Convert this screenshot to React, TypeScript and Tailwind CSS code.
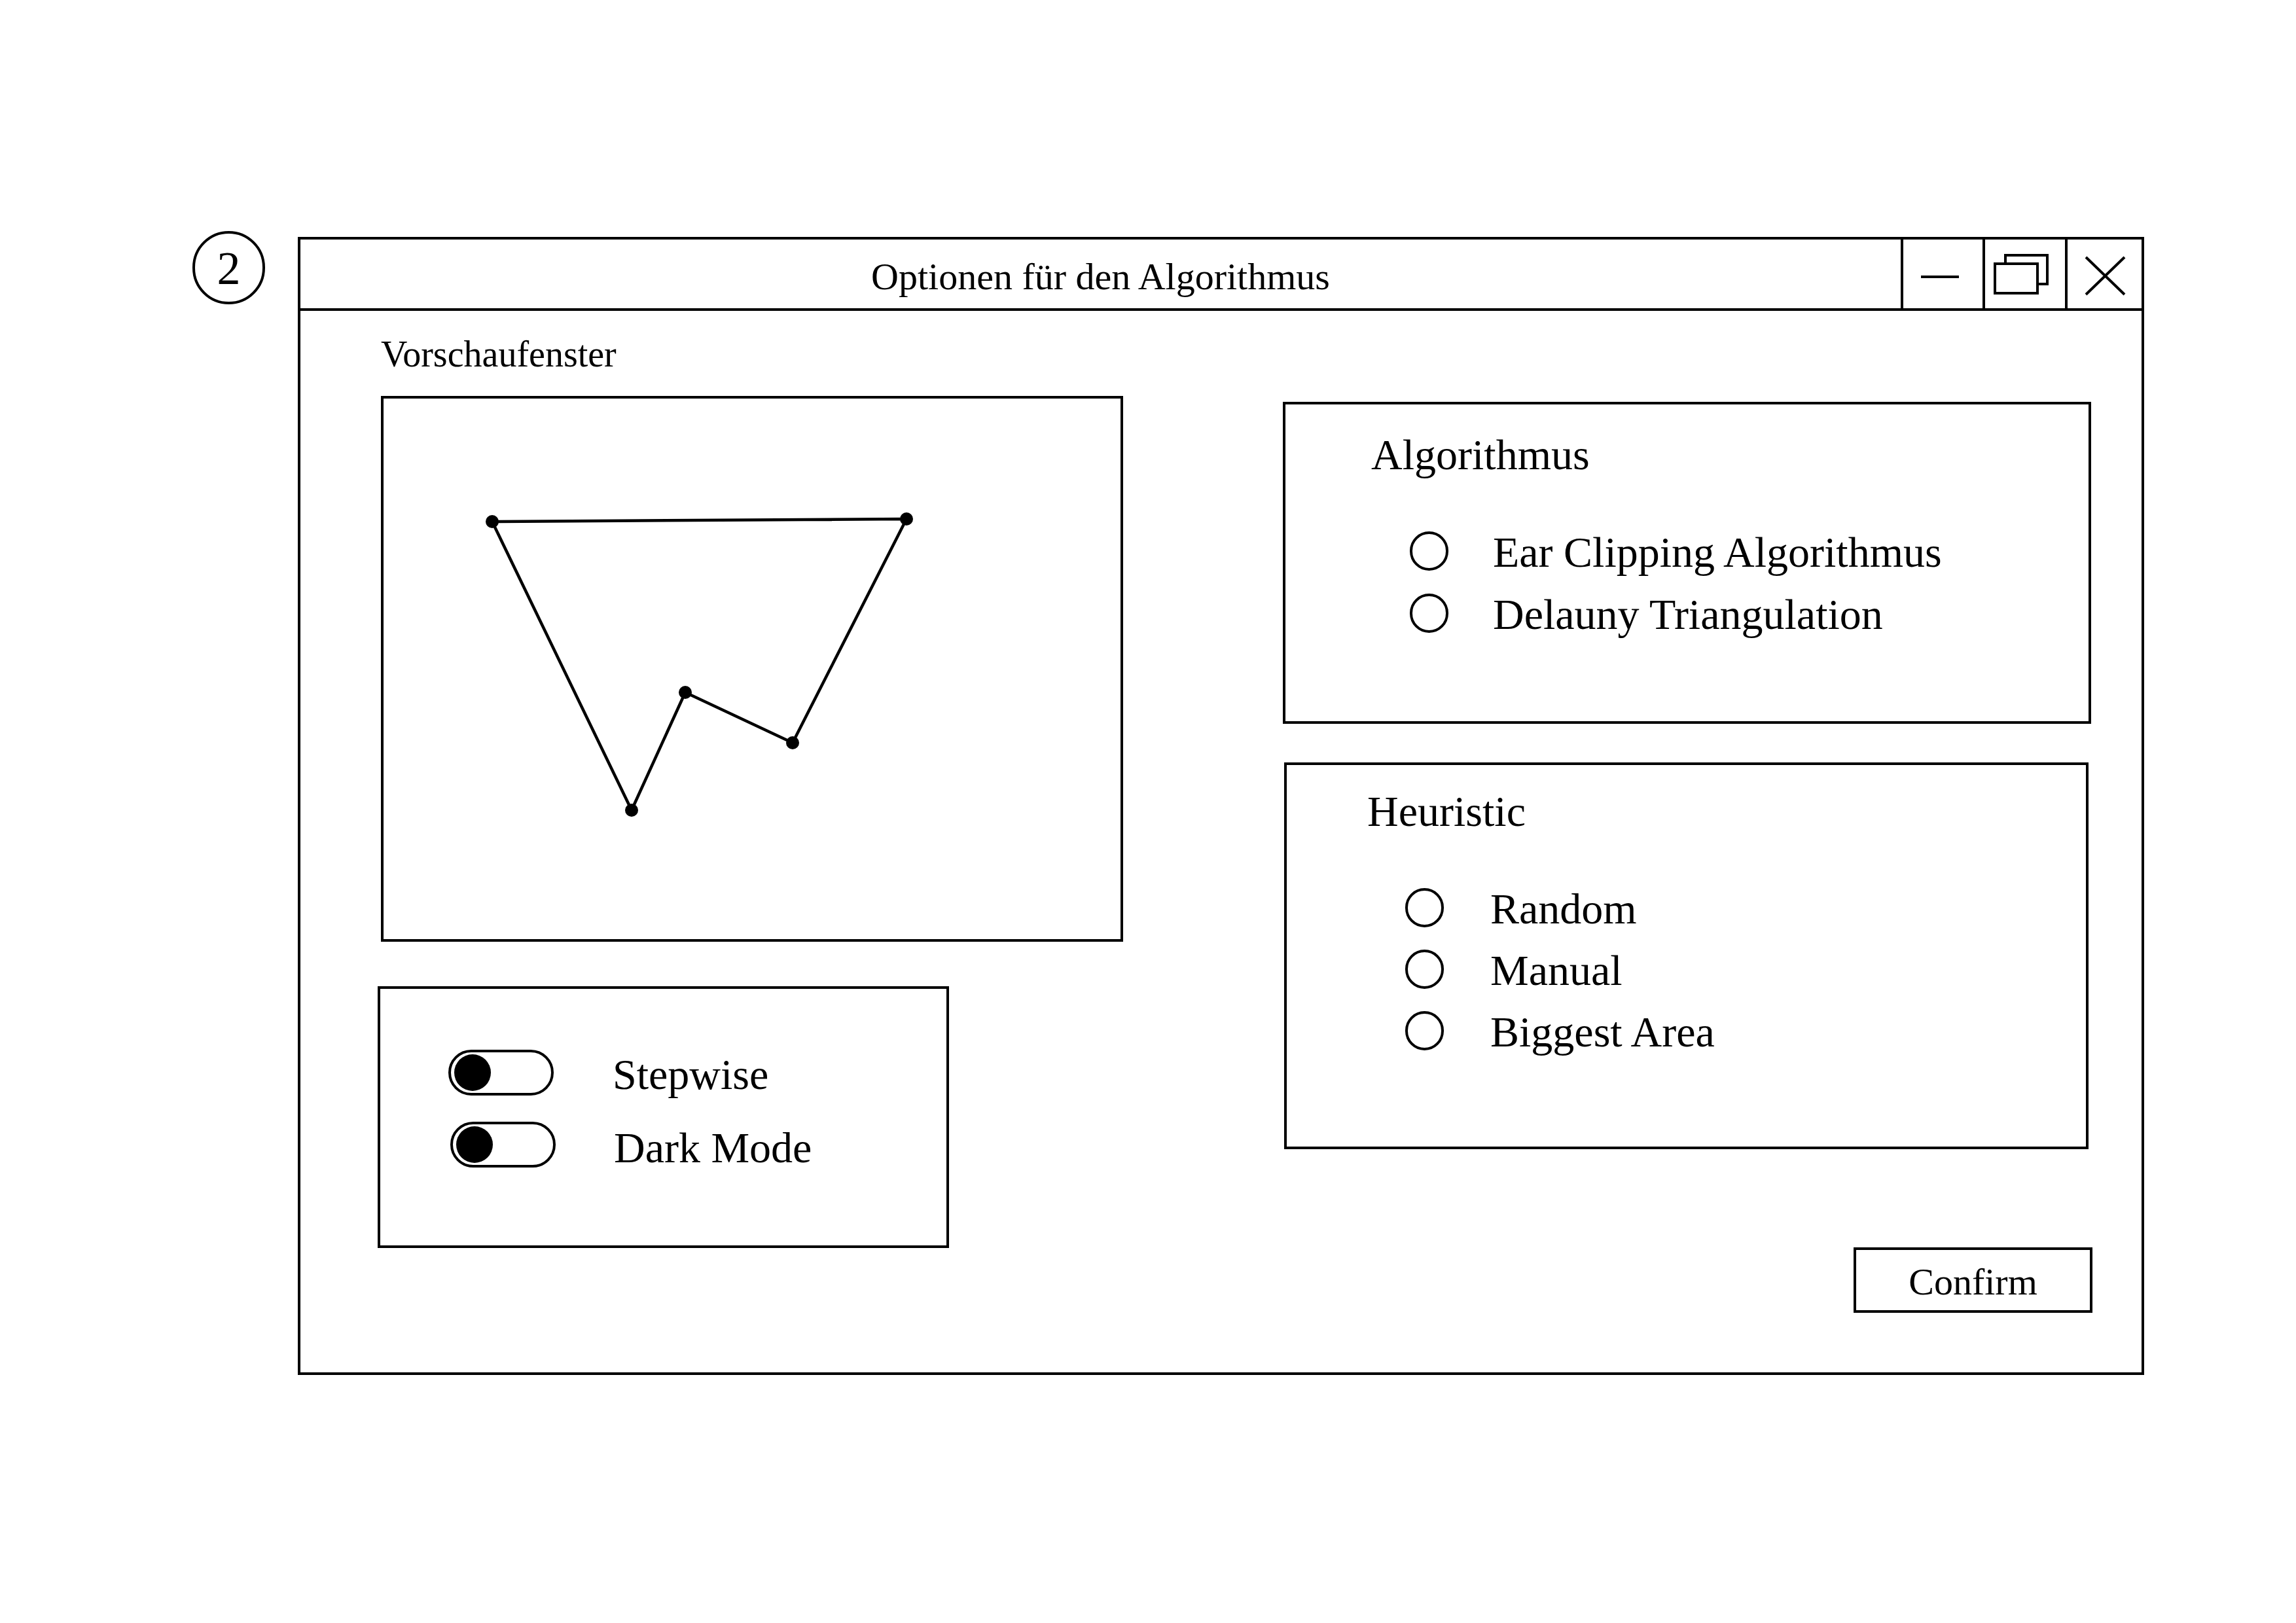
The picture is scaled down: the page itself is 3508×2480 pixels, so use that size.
import * as React from "react"

type Point = [number, number]

// polygon corners in the preview box (inner coords)
const polygon: Point[] = [
  [166, 188],
  [799, 184],
  [625, 526],
  [461, 449],
  [379, 629],
]

function Radio(props: { label: string; gap: number }) {
  return (
    <div className="flex flex-row items-center h-[60px]">
      <div className="w-[59px] h-[60px] rounded-full border-[4px] border-black shrink-0" />
      <span className="text-[66px] leading-none whitespace-nowrap pt-[4px]" style={{ marginLeft: props.gap }}>
        {props.label}
      </span>
    </div>
  )
}

function Toggle() {
  return (
    <div className="w-[161px] h-[70px] rounded-full border-[4px] border-black flex items-center pl-[5px] shrink-0">
      <div className="w-[56px] h-[56px] rounded-full bg-black" />
    </div>
  )
}

export default function App(): React.JSX.Element {
  return (
    <div className="w-[3508px] h-[2480px] bg-white text-black font-['Liberation_Serif','Times_New_Roman',serif]">
      <div className="flex flex-row items-start pl-[294px] pt-[353px]">
        <div className="w-[111px] h-[112px] rounded-full border-[4px] border-black flex items-center justify-center text-[72px] leading-none shrink-0 pt-[2px]">
          2
        </div>

        <div className="ml-[50px] mt-[9px] w-[2821px] h-[1739px] border-[4px] border-black flex flex-col">
          {/* title bar */}
          <div className="h-[109px] border-b-[4px] border-black flex flex-row">
            <div className="flex-1 flex items-center justify-center text-[58px] leading-none pt-[8px]">
              Optionen für den Algorithmus
            </div>
            <div className="w-[125px] border-l-[4px] border-black">
              <svg width="121" height="105" viewBox="0 0 121 105">
                <line x1="27" y1="57" x2="85" y2="57" stroke="black" strokeWidth="4" />
              </svg>
            </div>
            <div className="w-[126px] border-l-[4px] border-black">
              <svg width="122" height="105" viewBox="0 0 122 105">
                <rect x="31" y="24" width="64" height="44" fill="white" stroke="black" strokeWidth="4" />
                <rect x="15" y="37" width="65" height="45" fill="white" stroke="black" strokeWidth="4" />
              </svg>
            </div>
            <div className="w-[117px] border-l-[4px] border-black">
              <svg width="113" height="105" viewBox="0 0 113 105">
                <line x1="28" y1="27" x2="87" y2="84" stroke="black" strokeWidth="4" />
                <line x1="87" y1="27" x2="28" y2="84" stroke="black" strokeWidth="4" />
              </svg>
            </div>
          </div>

          {/* body */}
          <div className="flex-1 flex flex-row pl-[123px]">
            <div className="w-[1134px] flex flex-col">
              <div className="mt-[34px] h-[64px] text-[56px] leading-[64px] whitespace-nowrap">Vorschaufenster</div>

              <div className="mt-[32px] w-[1134px] h-[834px] border-[4px] border-black">
                <svg width="1126" height="826" viewBox="0 0 1126 826">
                  <polygon
                    points={polygon.map((p) => p.join(",")).join(" ")}
                    fill="none"
                    stroke="black"
                    strokeWidth="4.5"
                    strokeLinejoin="round"
                  />
                  {polygon.map((p, i) => (
                    <circle key={`pt-${i}`} cx={p[0]} cy={p[1]} r="10" fill="black" />
                  ))}
                </svg>
              </div>

              <div className="mt-[68px] ml-[-5px] w-[873px] h-[400px] border-[4px] border-black flex flex-col pt-[93px]">
                <div className="flex flex-row items-center h-[70px] pl-[104px]">
                  <Toggle />
                  <span className="ml-[90px] mt-[6px] text-[66px] leading-none">Stepwise</span>
                </div>
                <div className="flex flex-row items-center h-[70px] pl-[107px] mt-[40px]">
                  <Toggle />
                  <span className="ml-[89px] mt-[10px] text-[66px] leading-none">Dark Mode</span>
                </div>
              </div>
            </div>

            <div className="ml-[244px] flex flex-col">
              <div className="mt-[139px] w-[1235px] h-[492px] border-[4px] border-black flex flex-col pl-[131px] pt-[44px]">
                <div className="h-[66px] text-[66px] leading-none">Algorithmus</div>
                <div className="flex flex-col gap-[35px] mt-[84px] pl-[59px]">
                  <Radio label="Ear Clipping Algorithmus" gap={68} />
                  <Radio label="Delauny Triangulation" gap={68} />
                </div>
              </div>

              <div className="mt-[59px] ml-[2px] w-[1229px] h-[591px] border-[4px] border-black flex flex-col pl-[123px] pt-[38px]">
                <div className="h-[66px] text-[66px] leading-none">Heuristic</div>
                <div className="flex flex-col gap-[34px] mt-[84px] pl-[58px]">
                  <Radio label="Random" gap={71} />
                  <Radio label="Manual" gap={71} />
                  <Radio label="Biggest Area" gap={71} />
                </div>
              </div>

              <button
                type="button"
                className="mt-[150px] ml-[872px] w-[365px] h-[100px] border-[4px] border-black flex items-center justify-center text-[58px] leading-none bg-white pt-[6px]"
              >
                Confirm
              </button>
            </div>
          </div>
        </div>
      </div>
    </div>
  )
}
